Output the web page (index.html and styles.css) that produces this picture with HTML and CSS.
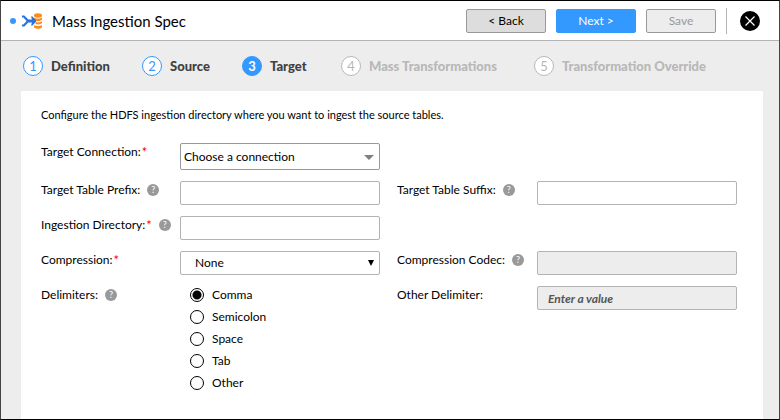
FILE: index.html
```html
<!DOCTYPE html>
<html lang="en">
<head>
<meta charset="utf-8">
<title>Mass Ingestion Spec</title>
<link rel="stylesheet" href="styles.css">
</head>
<body>
<div class="window">
  <header class="header">
    <span class="unsaved-dot"></span>
    <svg class="logo" viewBox="0 0 20 16" aria-hidden="true">
      <g fill="#ff8a1c">
        <ellipse cx="16" cy="2.5" rx="4" ry="2.2"/>
        <path d="M12 4.600c1.800 1.400 6.200 1.400 8 0v1.600c0 2-6 2.600-8 .6z"/>
        <path d="M13.500 9c2 .7 5 .4 6.500-.7V10c-.8 1.400-4.500 1.800-6.500 1z"/>
        <path d="M12 12c1.800 1.400 6.200 1.400 8 0v1.700c0 2.700-8 2.700-8 0z"/>
      </g>
      <path fill="#2673e0" d="M0 2.500h2.300l4 4H10l-1-3h1.500l4 4.500-4 4.500H9l1-3H6.300l-4 4H0v-2h1.400L4.600 8 1.400 4.500H0z"/>
    </svg>
    <h1 class="title">Mass Ingestion Spec</h1>
    <div class="actions">
      <button class="btn btn-back" type="button">&lt; Back</button>
      <button class="btn btn-next" type="button">Next &gt;</button>
      <button class="btn btn-save" type="button" disabled>Save</button>
      <span class="divider"></span>
      <button class="close" type="button" aria-label="Close">
        <svg viewBox="0 0 20 20" aria-hidden="true"><circle cx="10" cy="10" r="10"/><path d="m5.500 5.500 9 9m0-9-9 9" stroke="#fff" stroke-width="1.200"/></svg>
      </button>
    </div>
  </header>

  <ol class="steps">
    <li class="step done"><span class="num">1</span>Definition</li>
    <li class="step done"><span class="num">2</span>Source</li>
    <li class="step current" aria-current="step"><span class="num">3</span>Target</li>
    <li class="step"><span class="num">4</span>Mass Transformations</li>
    <li class="step"><span class="num">5</span>Transformation Override</li>
  </ol>

  <main class="panel">
    <p class="intro">Configure the HDFS ingestion directory where you want to ingest the source tables.</p>
    <form class="form">
      <div class="row">
        <div class="label"><label for="connection">Target Connection:</label><span class="req">*</span></div>
        <div class="picker picker-connection">
          <select class="field" id="connection"><option>Choose a connection</option></select>
        </div>
      </div>
      <div class="row">
        <div class="label"><label for="prefix">Target Table Prefix:</label><span class="help">?</span></div>
        <input class="field" id="prefix" type="text">
        <div class="label"><label for="suffix">Target Table Suffix:</label><span class="help">?</span></div>
        <input class="field" id="suffix" type="text">
      </div>
      <div class="row">
        <div class="label"><label for="directory">Ingestion Directory:</label><span class="req">*</span><span class="help">?</span></div>
        <input class="field" id="directory" type="text">
      </div>
      <div class="row">
        <div class="label"><label for="compression">Compression:</label><span class="req">*</span></div>
        <div class="picker picker-compression">
          <select class="field" id="compression"><option>None</option></select>
        </div>
        <div class="label"><label for="codec">Compression Codec:</label><span class="help">?</span></div>
        <input class="field" id="codec" type="text" disabled>
      </div>
      <div class="row">
        <div class="label"><span id="delimiters">Delimiters:</span><span class="help">?</span></div>
        <div class="radios" role="radiogroup" aria-labelledby="delimiters">
          <label class="radio"><input type="radio" name="delimiter" checked>Comma</label>
          <label class="radio"><input type="radio" name="delimiter">Semicolon</label>
          <label class="radio"><input type="radio" name="delimiter">Space</label>
          <label class="radio"><input type="radio" name="delimiter">Tab</label>
          <label class="radio"><input type="radio" name="delimiter">Other</label>
        </div>
        <div class="label"><label for="other">Other Delimiter:</label></div>
        <input class="field" id="other" type="text" placeholder="Enter a value" disabled>
      </div>
    </form>
  </main>
</div>
</body>
</html>
```

FILE: styles.css
```css
* {
  box-sizing: border-box;
}

body {
  margin: 0;
  background: #fff;
  color: #000;
  font: 12px/18px Lato, "Liberation Sans", sans-serif;
}

button,
input,
select {
  font: inherit;
  color: inherit;
}

.window {
  display: flex;
  flex-direction: column;
  min-height: 100vh;
  border: 1px solid #000;
  border-left-color: #444;
  border-right-color: #444;
  background: #ededed;
}

.header {
  display: flex;
  align-items: center;
  height: 40px;
  padding: 0 19px 0 9px;
  border-bottom: 1px solid #b3b3b3;
  background: #fff;
}

.unsaved-dot {
  width: 6px;
  height: 6px;
  margin-right: 6px;
  border-radius: 50%;
  background: #3399ff;
}

.logo {
  width: 20px;
  height: 16px;
  margin-right: 10px;
}

.title {
  margin: 0;
  font-size: 15px;
  font-weight: 400;
}

.actions {
  display: flex;
  align-items: center;
  gap: 10px;
  margin-left: auto;
}

.btn {
  width: 80px;
  height: 24px;
  padding: 0;
  border: 1px solid #999;
  border-radius: 2px;
}

.btn-back {
  background: #ddd;
}

.btn-next {
  border-color: #3399ff;
  background: #3399ff;
  color: #fff;
}

.btn-save {
  width: 70px;
  background: #ededed;
  color: #999;
}

.divider {
  width: 1px;
  height: 26px;
  background: #b3b3b3;
}

.close {
  width: 20px;
  height: 20px;
  margin-left: 3px;
  padding: 0;
  border: 0;
  background: none;
}

.close svg {
  display: block;
}

.steps {
  display: grid;
  grid-template-columns: 119px 100px 99px 193px auto;
  align-items: center;
  height: 50px;
  margin: 0;
  padding: 0 22px;
  list-style: none;
}

.step {
  display: flex;
  align-items: center;
  gap: 8px;
  color: #b8b8b8;
  font-size: 13px;
  font-weight: 900;
  white-space: nowrap;
}

.num {
  width: 20px;
  height: 20px;
  border: 1px solid #b8b8b8;
  border-radius: 50%;
  background: #fff;
  font-weight: 400;
  text-align: center;
}

.done,
.current {
  color: #404040;
}

.done .num {
  border-color: #3399ff;
  color: #3399ff;
}

.current .num {
  border-color: #3399ff;
  background: #3399ff;
  color: #fff;
  font-weight: 700;
}

.panel {
  flex: 1;
  margin: 0 16px 0 20px;
  padding: 15px 26px 15px 20px;
  background: #fff;
}

.intro {
  margin: 0 0 19px;
  font-size: 11px;
}

.form {
  display: flex;
  flex-direction: column;
  gap: 11px;
}

.row {
  display: grid;
  grid-template-columns: 139px 1fr 157px 1fr;
  align-items: start;
}

.label {
  display: flex;
  align-items: center;
}

.row > .label:nth-child(3) {
  padding-left: 17px;
}

.req {
  margin-left: 1px;
  color: #f00;
  font-size: 13px;
}

.help {
  width: 12px;
  height: 12px;
  margin-left: 7px;
  border-radius: 50%;
  background: #999;
  color: #fff;
  font-size: 9px;
  line-height: 12px;
  text-align: center;
}

.field {
  display: block;
  width: 100%;
  min-width: 0;
  height: 24px;
  margin: 0;
  padding: 0 10px;
  border: 1px solid #b3b3b3;
  border-radius: 2px;
  background: #fff;
  appearance: none;
}

.field:disabled {
  background: #ededed;
  opacity: 1;
}

.field::placeholder {
  color: #555;
  font-style: italic;
  font-weight: 700;
}

.picker {
  position: relative;
}

.picker::after {
  content: "";
  position: absolute;
  pointer-events: none;
}

.picker-connection .field {
  height: 27px;
  padding: 0 3px;
  border-color: #999;
}

.picker-connection::after {
  top: 12px;
  right: 6px;
  border: 5px solid transparent;
  border-top-color: #808080;
  border-bottom: 0;
}

.picker-compression .field {
  padding: 0 14px;
}

.picker-compression::after {
  top: 9px;
  right: 6px;
  border: 3px solid transparent;
  border-top: 6px solid #000;
  border-bottom: 0;
}

.radios {
  display: flex;
  flex-direction: column;
  gap: 4px;
  padding-left: 10px;
}

.radio {
  display: flex;
  align-items: center;
  gap: 8px;
}

.radio input {
  width: 14px;
  height: 14px;
  margin: 0;
  border: 1px solid #000;
  border-radius: 50%;
  appearance: none;
}

.radio input:checked {
  background: radial-gradient(circle, #000 4px, #fff 5px);
}
```
